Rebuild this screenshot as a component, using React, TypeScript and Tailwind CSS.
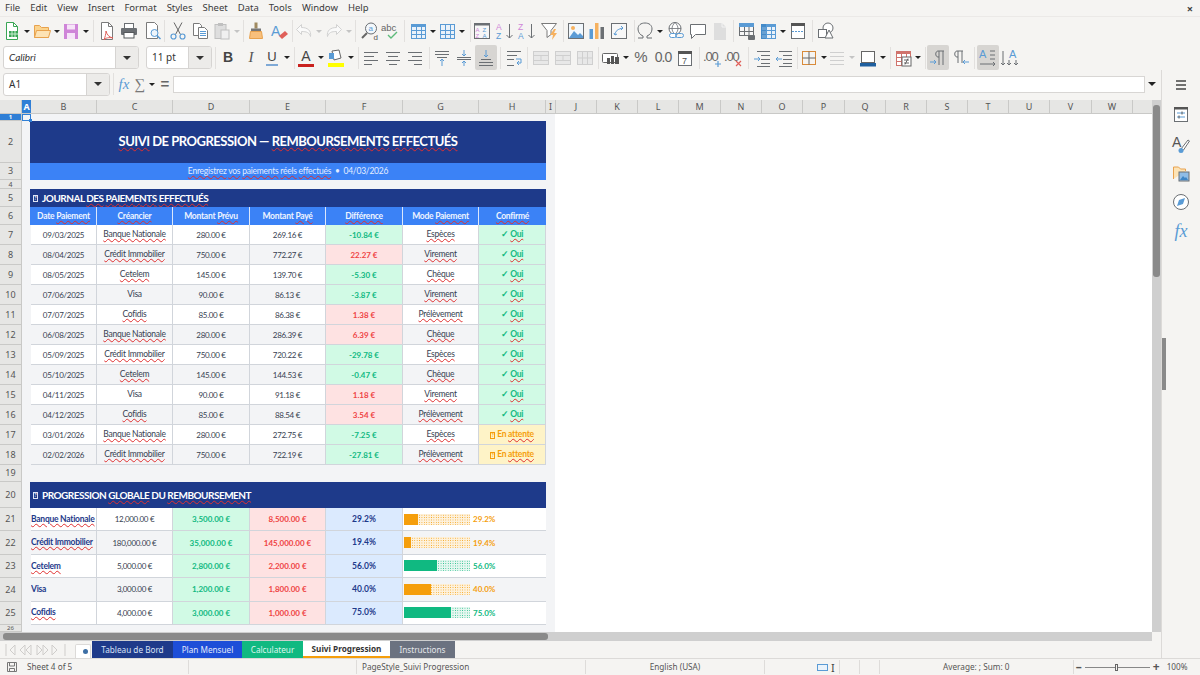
import type { ReactNode } from 'react'

const S = ({ children, size = 20 }: { children: ReactNode; size?: number }) => (
  <svg width={size} height={size} viewBox="0 0 20 20" fill="none" strokeWidth="1" className="block">
    {children}
  </svg>
)

const Ic = ({ children, className = '' }: { children: ReactNode; className?: string }) => (
  <span className={'flex h-[22px] w-[22px] shrink-0 items-center justify-center rounded-[2px] ' + className}>{children}</span>
)
const Arrow = ({ off = false }: { off?: boolean }) => (
  <span className="flex w-[8px] shrink-0 justify-center">
    <span className={'h-0 w-0 border-x-[3px] border-t-[3px] border-x-transparent ' + (off ? 'border-t-[#c4c4c4]' : 'border-t-[#222222]')} />
  </span>
)
const Sep = ({ className = '' }: { className?: string }) => <span className={'h-[22px] w-px shrink-0 bg-[#e2e0de] ' + className} />

const Lines = ({ ys, x1, x2, color = '#6b6f73' }: { ys: number[]; x1: number[]; x2: number[]; color?: string }) => (
  <>
    {ys.map((y, i) => (
      <path key={y} d={`M${x1[i]} ${y}.5H${x2[i]}`} stroke={color} />
    ))}
  </>
)

const Grid = ({ stroke = '#5a9bd5', fill = '#eaf2fa', head = true }: { stroke?: string; fill?: string; head?: boolean }) => (
  <>
    <rect x="3.5" y="3.5" width="14" height="14" fill={fill} stroke={stroke} />
    {head && <rect x="3" y="3" width="15" height="3" fill={stroke} />}
    <path d="M8.5 4v13M13.5 4v13M4 9.5h13M4 13.5h13" stroke={stroke} />
  </>
)

const NewDoc = () => (
  <S>
    <path d="M4.5 1.5h7l4 4v13h-11z" fill="#fff" stroke="#3aa655" />
    <path d="M11.5 1.5v4h4" stroke="#3aa655" />
    <rect x="7" y="10" width="9" height="6" fill="#3aa655" />
    <path d="M10 10v6M13 10v6M7 13h9" stroke="#c9ecd0" />
  </S>
)
const Folder = () => (
  <S>
    <path d="M2.5 16.5v-12h5l2 2h7v10z" fill="#fbd38d" stroke="#e8a24e" />
    <path d="M2.5 16.5l2-7h14l-2 7z" fill="#fde3b5" stroke="#e8a24e" />
  </S>
)
const Save = () => (
  <S>
    <rect x="3" y="3" width="14" height="15" fill="#cf85d8" />
    <rect x="6" y="3.5" width="8" height="5" fill="#f6e4f8" />
    <rect x="6" y="12" width="8" height="6" fill="#f6e4f8" />
  </S>
)
const Pdf = () => (
  <S>
    <path d="M4.5 1.5h7l4 4v13h-11z" fill="#fff" stroke="#7a7a7a" />
    <path d="M11.5 1.5v4h4" stroke="#7a7a7a" />
    <path d="M9 10c1 4 3 6 7 7-4-1-8 0-9 2 1-3 2-6 2-9z" stroke="#e0605a" />
  </S>
)
const Printer = () => (
  <S>
    <rect x="5.5" y="2.5" width="9" height="5" fill="#fff" stroke="#6b6f73" />
    <rect x="2" y="7" width="16" height="7" rx="1" fill="#6b6f73" />
    <rect x="5" y="11.5" width="10" height="5.5" fill="#fff" stroke="#55585b" />
  </S>
)
const Preview = () => (
  <S>
    <path d="M3.5 1.5h8l3 3v13h-11z" fill="#fff" stroke="#7a7a7a" />
    <circle cx="11.5" cy="12" r="3.5" fill="#eef5fb" stroke="#5a9bd5" />
    <path d="M14 14.5l3.5 3.5" stroke="#5a9bd5" strokeWidth="1.5" />
  </S>
)
const Cut = () => (
  <S>
    <path d="M6 1.5l6.5 12M14 1.5l-6.5 12" stroke="#666" />
    <circle cx="5.5" cy="15.5" r="2.5" stroke="#5a9bd5" strokeWidth="1.2" />
    <circle cx="14.5" cy="15.5" r="2.5" stroke="#5a9bd5" strokeWidth="1.2" />
  </S>
)
const Copy = () => (
  <S>
    <path d="M3.5 2.5h6l2 2v10h-8z" fill="#fff" stroke="#7a7a7a" />
    <path d="M8.5 6.5h6l3 3v8h-9z" fill="#fff" stroke="#7a7a7a" />
    <Lines ys={[10, 12, 14]} x1={[10, 10, 10]} x2={[16, 16, 16]} color="#5a9bd5" />
  </S>
)
const Paste = () => (
  <S>
    <rect x="3" y="3.5" width="11" height="14" fill="#dedede" stroke="#c0c0c0" />
    <rect x="6" y="2" width="5" height="3" fill="#c0c0c0" />
    <rect x="9" y="9" width="8" height="9" fill="#f0f0f0" stroke="#c0c0c0" />
  </S>
)
const Clone = () => (
  <S>
    <rect x="8.5" y="1.5" width="3" height="6" fill="#a08a60" />
    <rect x="5" y="7.5" width="10" height="2.5" fill="#777" />
    <path d="M4.5 10.5h11l1 7h-13z" fill="#f9c07c" stroke="#e8a24e" />
  </S>
)
const Clear = () => (
  <S>
    <text x="2" y="15" fontFamily="Liberation Sans" fontSize="14" fill="#5a9bd5">A</text>
    <path d="M10 15l6-5 3 3-6 5z" fill="#e0605a" />
  </S>
)
const Undo = ({ flip = false }: { flip?: boolean }) => (
  <S>
    <g transform={flip ? 'matrix(-1 0 0 1 20 0)' : undefined}>
      <path d="M2.5 8.5l5-5v3c6 0 10 3 9 9-1-4-4-5-9-5v3z" fill="#fafafa" stroke="#d2d2d2" />
    </g>
  </S>
)
const Find = () => (
  <S>
    <circle cx="11" cy="7.5" r="5.5" fill="#f3f8fc" stroke="#6b6f73" />
    <path d="M7 12l-5 5" stroke="#666" strokeWidth="2" />
    <text x="8.5" y="10" fontFamily="Liberation Sans" fontSize="8" fill="#5a9bd5">a</text>
    <text x="13.5" y="19" fontFamily="Liberation Sans" fontSize="8" fill="#555">d</text>
  </S>
)
const Spell = () => (
  <S>
    <text x="0" y="10" fontFamily="Liberation Sans" fontSize="9.5" fill="#666">abc</text>
    <path d="M7 14l3 3 6-6" stroke="#5dbb7a" strokeWidth="1.4" />
  </S>
)
const Sort = ({ a, b }: { a: string; b: string }) => (
  <S>
    <text x="1" y="9" fontFamily="Liberation Sans" fontSize="8.5" fill="#cf85d8">{a}</text>
    <text x="1" y="18" fontFamily="Liberation Sans" fontSize="8.5" fill="#5a9bd5">{b}</text>
    <path d="M14.5 3v14M11.5 14l3 3 3-3" stroke="#6b6f73" />
  </S>
)
const AutoSort = () => (
  <S>
    <rect x="2.5" y="2.5" width="15" height="15" fill="#f7f7f7" stroke="#6b6f73" />
    <rect x="2" y="2" width="16" height="2.5" fill="#6b6f73" />
    <text x="3.5" y="10.5" fontFamily="Liberation Sans" fontSize="6" fill="#cf85d8">A</text>
    <text x="10.5" y="10.5" fontFamily="Liberation Sans" fontSize="6" fill="#5a9bd5">Z</text>
    <text x="3.5" y="16.5" fontFamily="Liberation Sans" fontSize="6" fill="#cf85d8">Z</text>
    <text x="10.5" y="16.5" fontFamily="Liberation Sans" fontSize="6" fill="#5a9bd5">A</text>
  </S>
)
const Filter = () => (
  <S>
    <path d="M1.5 2.5h15l-5.5 7v4l-4 3v-7z" fill="#fff" stroke="#7a7a7a" />
    <path d="M14 8l-4 6h3l-1 5 5-7h-3l2-4z" fill="#f6b15f" />
  </S>
)
const Picture = () => (
  <S>
    <rect x="2.5" y="2.5" width="15" height="15" fill="#f1f7fc" stroke="#6b6f73" />
    <circle cx="7" cy="7" r="2" fill="#f6b15f" />
    <path d="M3 17l5-7 4 4 2-2 3 3v2z" fill="#5a9bd5" />
  </S>
)
const Chart = () => (
  <S>
    <rect x="2.5" y="8" width="3.5" height="10" fill="#5a9bd5" />
    <rect x="8" y="2" width="3.5" height="16" fill="#f6b15f" />
    <rect x="13.5" y="6" width="3.5" height="12" fill="#6b6f73" />
  </S>
)
const Pivot = () => (
  <S>
    <rect x="2.5" y="2.5" width="15" height="15" fill="#f7f7f7" stroke="#6b6f73" />
    <path d="M6 14c0-4 3-6 8-7M12 5l2 2-2 2M5 12l1 2 2-1" stroke="#5a9bd5" />
  </S>
)
const Omega = () => (
  <S>
    <path d="M3 17h5v-2c-3-1-5-4-5-7 0-4 3-6 7-6s7 2 7 6c0 3-2 6-5 7v2h5" stroke="#6b6f73" />
  </S>
)
const LinkI = () => (
  <S>
    <circle cx="9" cy="7.5" r="6" fill="#fff" stroke="#6b6f73" />
    <path d="M3 7.5h12M9 1.5c-4 4-4 8 0 12M9 1.5c4 4 4 8 0 12" stroke="#6b6f73" strokeWidth="0.8" />
    <rect x="3.5" y="12.5" width="7" height="4" rx="2" fill="#fff" stroke="#5a9bd5" />
    <rect x="9.5" y="12.5" width="8" height="4" rx="2" stroke="#5a9bd5" />
  </S>
)
const Comment = () => (
  <S>
    <path d="M2.5 3.5h15v10h-10l-4 4v-4h-1z" fill="#fff" stroke="#6b6f73" />
  </S>
)
const Note = () => (
  <S>
    <path d="M4 2h8l4 4v13H4z" fill="#dedede" />
    <path d="M12 2v4h4" stroke="#f3f3f3" />
  </S>
)
const Freeze = () => (
  <S>
    <rect x="2.5" y="2.5" width="14" height="12" fill="#f7f7f7" stroke="#6b6f73" />
    <rect x="2" y="2" width="15" height="4" fill="#5a9bd5" />
    <path d="M7.5 6v8M12 6v8M3 10.5h13" stroke="#6b6f73" />
    <rect x="11" y="14" width="7" height="5" rx="1" fill="#6b6f73" />
  </S>
)
const Split = () => (
  <S>
    <Grid />
    <rect x="3" y="3" width="5" height="15" fill="#3d85c6" opacity="0.75" />
  </S>
)
const HeaderI = () => (
  <S>
    <rect x="3.5" y="2.5" width="13" height="15" fill="#fff" stroke="#6b6f73" />
    <rect x="3" y="2" width="14" height="3" fill="#555" />
    <path d="M4 10.5h12" stroke="#5a9bd5" strokeDasharray="2 1" />
  </S>
)
const Shapes = () => (
  <S>
    <circle cx="12" cy="7" r="5" fill="#fff" stroke="#6b6f73" />
    <rect x="2.5" y="8.5" width="8" height="8" fill="#fff" stroke="#6b6f73" />
    <path d="M13 9l4 8h-8z" fill="#fff" stroke="#6b6f73" />
  </S>
)

const AlignI = ({ kind }: { kind: 'l' | 'c' | 'r' }) => {
  const s =
    kind === 'l' ? { a: [3, 3, 3, 3], b: [17, 13, 17, 11] } : kind === 'c' ? { a: [3, 5, 3, 6], b: [17, 15, 17, 14] } : { a: [3, 7, 3, 9], b: [17, 17, 17, 17] }
  return (
    <S>
      <Lines ys={[4, 8, 12, 16]} x1={s.a} x2={s.b} />
    </S>
  )
}
const VAlign = ({ kind }: { kind: 't' | 'm' | 'b' }) => (
  <S>
    {kind === 't' && (
      <>
        <Lines ys={[3, 6, 9]} x1={[3, 3, 5]} x2={[17, 17, 15]} />
        <path d="M10 18V11M8 13l2-2 2 2" stroke="#5a9bd5" />
      </>
    )}
    {kind === 'm' && (
      <>
        <Lines ys={[9, 11]} x1={[3, 3]} x2={[17, 17]} />
        <path d="M10 2v6M8 6l2 2 2-2M10 18v-5M8 15l2-2 2 2" stroke="#5a9bd5" />
      </>
    )}
    {kind === 'b' && (
      <>
        <Lines ys={[11, 14, 17]} x1={[5, 3, 3]} x2={[15, 17, 17]} />
        <path d="M10 2v7M8 7l2 2 2-2" stroke="#5a9bd5" />
      </>
    )}
  </S>
)
const Wrap = () => (
  <S>
    <Lines ys={[3, 7, 11, 17]} x1={[3, 3, 3, 3]} x2={[17, 13, 10, 10]} />
    <path d="M12 11h5v4h-4M15 13l-2 2 2 2" stroke="#5a9bd5" />
  </S>
)
const Merge = ({ cross = false }: { cross?: boolean }) => (
  <S>
    <rect x="2.5" y="3.5" width="15" height="13" fill="#e8e8e8" stroke="#cfcfcf" />
    <path d={cross ? 'M7.5 4v12M12.5 4v12M3 10h14' : 'M3 7.5h14M3 12.5h14M10 8v4'} stroke="#cfcfcf" />
  </S>
)
const Currency = () => (
  <S>
    <rect x="1.5" y="5.5" width="15" height="9" rx="1" fill="#fff" stroke="#666" />
    <rect x="6" y="10" width="3" height="6" fill="#555" />
    <rect x="10" y="8" width="3" height="8" fill="#555" />
    <rect x="14" y="9" width="4" height="7" fill="#555" />
  </S>
)
const DateI = () => (
  <S>
    <rect x="3.5" y="3.5" width="13" height="14" fill="#fff" stroke="#6b6f73" />
    <rect x="3" y="3" width="14" height="3" fill="#555" />
    <text x="7" y="16" fontFamily="Liberation Sans" fontSize="9" fill="#555">7</text>
  </S>
)
const Dec = ({ add }: { add: boolean }) => (
  <S>
    <text x="0" y="13" fontFamily="Liberation Sans" fontSize="13" letterSpacing="-1.2" fill="#666">.00</text>
    {add ? <path d="M15 13v6M12 16h6" stroke="#5a9bd5" strokeWidth="1.2" /> : <path d="M12 13l5 5M17 13l-5 5" stroke="#e0605a" strokeWidth="1.2" />}
  </S>
)
const Indent = ({ out = false }: { out?: boolean }) => (
  <S>
    <Lines ys={[3, 7, 11, 15, 18]} x1={[5, 9, 9, 9, 5]} x2={[18, 18, 18, 18, 18]} />
    <path d={out ? 'M8 11H2M4 9l-2 2 2 2' : 'M2 11h6M6 9l2 2-2 2'} stroke="#5a9bd5" />
  </S>
)
const Borders = () => (
  <S>
    <rect x="3.5" y="3.5" width="13" height="13" stroke="#d98b3a" />
    <path d="M10 3.5v13M3.5 10h13" stroke="#666" />
  </S>
)
const BStyle = () => (
  <S>
    <Lines ys={[4, 8, 12, 16]} x1={[3, 3, 3, 3]} x2={[17, 17, 17, 17]} color="#cfcfcf" />
  </S>
)
const BColor = () => (
  <S>
    <rect x="3.5" y="3.5" width="13" height="11" fill="#fff" stroke="#666" />
    <rect x="2" y="15" width="16" height="3.5" fill="#1f5f9f" />
  </S>
)
const Cond = () => (
  <S>
    <Grid stroke="#d0736c" fill="#fff" />
    <rect x="9" y="9" width="9" height="9" fill="#fff" stroke="#666" />
    <path d="M11 12h5M11 15h5M15 10.5l-3 6" stroke="#666" />
  </S>
)
const Para = ({ left }: { left: boolean }) => (
  <S>
    {left ? (
      <>
        <path d="M16 3h-6c-3 0-3 6 0 6h1M11 3v14M15 3v14" stroke="#6b6f73" />
        <path d="M2 14h6M6 12l2 2-2 2" stroke="#5a9bd5" />
      </>
    ) : (
      <>
        <path d="M12 3H6c-3 0-3 6 0 6h1M7 3v12M11 3v12" stroke="#6b6f73" />
        <path d="M18 14h-6M14 12l-2 2 2 2" stroke="#5a9bd5" />
      </>
    )}
  </S>
)
const TextDir = () => (
  <S>
    <text x="1" y="10" fontFamily="Liberation Sans" fontSize="11" fill="#5a9bd5">A</text>
    <path d="M12 3h5M12 7h5M12 11h5M2 16h15M15 14l2 2-2 2" stroke="#6b6f73" />
  </S>
)
const TextVert = () => (
  <S>
    <text x="9" y="10" fontFamily="Liberation Sans" fontSize="11" fill="#5a9bd5">A</text>
    <path d="M3 3v14M1 15l2 2 2-2M9 12v5M7 15l2 2 2-2M16 12v5M14 15l2 2 2-2" stroke="#6b6f73" />
  </S>
)
const Fx = ({ cls }: { cls: string }) => <span className={'font-["Liberation_Serif"] italic text-[#5a9bd5] ' + cls}>fx</span>

const Tb1 = () => (
  <div className="flex h-[28px] items-center pl-px">
    <Ic><NewDoc /></Ic><Arrow />
    <Ic><Folder /></Ic><Arrow />
    <Ic className="-ml-px"><Save /></Ic><Arrow />
    <Sep className="ml-[3px]" />
    <Ic className="ml-[2px]"><Pdf /></Ic>
    <Ic><Printer /></Ic>
    <Ic className="ml-[2px]"><Preview /></Ic>
    <Sep />
    <Ic className="ml-[2px]"><Cut /></Ic>
    <Ic><Copy /></Ic>
    <Ic><Paste /></Ic><Arrow off />
    <Sep className="ml-[2px]" />
    <Ic className="ml-px"><Clone /></Ic>
    <Ic className="ml-px"><Clear /></Ic>
    <Sep className="ml-[2px]" />
    <Ic><Undo /></Ic><Arrow off />
    <Ic><Undo flip /></Ic><Arrow off />
    <Sep className="ml-[2px]" />
    <Ic className="ml-[3px]"><Find /></Ic>
    <Ic className="-ml-px"><Spell /></Ic>
    <Sep className="ml-[2px]" />
    <Ic className="ml-[2px]"><S><Grid /></S></Ic><Arrow />
    <Ic className="-ml-px"><S><Grid head={false} /></S></Ic><Arrow />
    <Sep className="ml-[4px]" />
    <Ic><AutoSort /></Ic>
    <Ic className="ml-px"><Sort a="A" b="Z" /></Ic>
    <Ic><Sort a="Z" b="A" /></Ic>
    <Ic className="ml-px"><Filter /></Ic>
    <Sep className="ml-[2px]" />
    <Ic className="ml-px"><Picture /></Ic>
    <Ic className="-ml-px"><Chart /></Ic>
    <Ic><Pivot /></Ic>
    <Sep className="ml-[4px]" />
    <Ic className="-ml-px"><Omega /></Ic><Arrow />
    <Ic className="ml-px"><LinkI /></Ic>
    <Ic><Comment /></Ic>
    <Ic><Note /></Ic>
    <Sep className="ml-[2px]" />
    <Ic className="ml-[2px]"><Freeze /></Ic>
    <Ic className="-ml-px"><Split /></Ic><Arrow />
    <Ic><HeaderI /></Ic>
    <Sep className="ml-[3px]" />
    <Ic className="ml-[2px]"><Shapes /></Ic>
  </div>
)

const Combo = ({ w, text, cls = '' }: { w: string; text: string; cls?: string }) => (
  <div className={'flex h-[23px] shrink-0 overflow-hidden rounded-[3px] border border-[#d6d4d2] bg-white ' + w}>
    <span className={'flex flex-1 items-center pl-[5px] text-[10px] text-[#333] ' + cls}>{text}</span>
    <span className="flex w-[23px] items-center justify-center border-l border-[#d6d4d2] bg-[#ecebe9]">
      <span className="h-0 w-0 border-x-[4px] border-t-[4px] border-x-transparent border-t-[#333]" />
    </span>
  </div>
)

const Tb2 = () => (
  <div className="flex h-[25px] items-center pl-[3px]">
    <Combo w="w-[136px]" text="Calibri" cls="font-['Lato'] italic" />
    <Combo w="ml-[7px] w-[66px]" text="11 pt" />
    <Sep className="ml-[3px]" />
    <Ic className="ml-px"><span className="font-['Liberation_Sans'] text-[14px] font-bold text-[#444]">B</span></Ic>
    <Ic className="ml-px"><span className="font-['Liberation_Serif'] text-[15px] italic text-[#555]">I</span></Ic>
    <Ic className="-ml-px"><span className="border-b-2 border-[#7fa9d6] px-px font-['Liberation_Sans'] text-[13px] leading-[14px] text-[#444]">U</span></Ic><Arrow />
    <Sep className="ml-[3px]" />
    <Ic><span className="w-[16px] border-b-[3px] border-[#c9211e] text-center font-['Liberation_Sans'] text-[14px] leading-[15px] text-[#444]">A</span></Ic><Arrow />
    <Ic><S><path d="M6 3l7-1 2 8-7 2z" fill="#fff" stroke="#666" /><rect x="3" y="5" width="5" height="6" fill="#5a9bd5" /><rect x="2" y="15" width="16" height="4" fill="#ffff00" /></S></Ic><Arrow />
    <Sep className="ml-[3px]" />
    <Ic className="ml-px"><AlignI kind="l" /></Ic>
    <Ic><AlignI kind="c" /></Ic>
    <Ic><AlignI kind="r" /></Ic>
    <Sep className="ml-[3px]" />
    <Ic className="ml-px"><VAlign kind="t" /></Ic>
    <Ic><VAlign kind="m" /></Ic>
    <Ic className="h-[25px] bg-[#d7d5d2]"><VAlign kind="b" /></Ic>
    <Sep className="ml-[3px]" />
    <Ic className="ml-[2px]"><Wrap /></Ic>
    <Sep className="ml-[2px]" />
    <Ic className="ml-[2px]"><Merge /></Ic>
    <Ic><Merge /></Ic>
    <Ic><Merge cross /></Ic>
    <Sep className="ml-[2px]" />
    <Ic className="ml-px"><Currency /></Ic><Arrow />
    <Ic><span className="font-['Liberation_Sans'] text-[15px] text-[#666]">%</span></Ic>
    <Ic><span className="font-['Liberation_Sans'] text-[14px] tracking-[-1px] text-[#666]">0.0</span></Ic>
    <Ic><DateI /></Ic>
    <Sep className="ml-[3px]" />
    <Ic className="ml-[2px]"><Dec add /></Ic>
    <Ic className="-ml-px"><Dec add={false} /></Ic>
    <Sep className="ml-[3px]" />
    <Ic className="ml-[2px]"><Indent /></Ic>
    <Ic><Indent out /></Ic>
    <Sep className="ml-[2px]" />
    <Ic><Borders /></Ic><Arrow />
    <Ic className="-ml-[2px]"><BStyle /></Ic><Arrow off />
    <Ic className="ml-px"><BColor /></Ic><Arrow />
    <Sep className="ml-[3px]" />
    <Ic className="ml-px"><Cond /></Ic><Arrow />
    <Sep className="ml-[3px]" />
    <Ic className="ml-px h-[25px] bg-[#d7d5d2]"><Para left /></Ic>
    <Ic className="ml-px"><Para left={false} /></Ic>
    <Sep className="ml-[2px]" />
    <Ic className="ml-[2px] h-[25px] bg-[#d7d5d2]"><TextDir /></Ic>
    <Ic><TextVert /></Ic>
  </div>
)

const FormulaBar = () => (
  <div className="flex h-[30px] items-center pb-[2px] pl-[3px]">
    <Combo w="w-[107px]" text="A1" />
    <Sep className="ml-[3px]" />
    <Ic className="-ml-px"><Fx cls="text-[15px]" /></Ic>
    <span className="flex w-[9px] justify-center font-['Liberation_Serif'] text-[15px] text-[#777]">∑</span>
    <span className="ml-[4px]"><Arrow /></span>
    <span className="ml-[2px] flex w-[14px] justify-center font-['Liberation_Sans'] text-[15px] font-bold text-[#666]">=</span>
    <div className="ml-px h-[17px] w-[972px] border border-[#d8d6d4] bg-white" />
    <span className="ml-[3px] h-0 w-0 border-x-[4px] border-t-[4px] border-x-transparent border-t-[#222]" />
  </div>
)

const cols: [string, string][] = [
  ['B', 'w-[66px]'], ['C', 'w-[76px]'], ['D', 'w-[77px]'], ['E', 'w-[76px]'], ['F', 'w-[77px]'], ['G', 'w-[76px]'], ['H', 'w-[67px]'], ['I', 'w-[10px]'],
  ['J', 'w-[41px]'], ['K', 'w-[41px]'], ['L', 'w-[41px]'], ['M', 'w-[42px]'], ['N', 'w-[41px]'], ['O', 'w-[41px]'], ['P', 'w-[42px]'], ['Q', 'w-[41px]'],
  ['R', 'w-[41px]'], ['S', 'w-[41px]'], ['T', 'w-[41px]'], ['U', 'w-[41px]'], ['V', 'w-[42px]'], ['W', 'w-[41px]'],
]

const ColHeaders = () => (
  <div className="flex h-[14px] border-b border-[#c9c9c7] bg-[#e6e6e4] font-['Noto_Sans'] text-[9px] leading-[13px] text-[#555]">
    <div className="w-[22px] shrink-0 border-r border-[#c9c9c7]" />
    <div className="w-[9px] shrink-0 bg-[#2f7fd6] text-center font-bold text-white">A</div>
    {cols.map(([c, w]) => (
      <div key={c} className={'shrink-0 border-r border-[#c9c9c7] text-center ' + w}>{c}</div>
    ))}
  </div>
)

const rowLabels: [string, string][] = [
  ['1', 'h-[7px] bg-[#2f7fd6] text-[6px] font-bold leading-none text-white'], ['2', 'h-[42px]'], ['3', 'h-[17px]'], ['4', 'h-[9px] text-[7px] leading-none'], ['5', 'h-[18px]'], ['6', 'h-[18px]'],
  ['7', 'h-[20px]'], ['8', 'h-[20px]'], ['9', 'h-[20px]'], ['10', 'h-[20px]'], ['11', 'h-[20px]'], ['12', 'h-[20px]'],
  ['13', 'h-[20px]'], ['14', 'h-[20px]'], ['15', 'h-[20px]'], ['16', 'h-[20px]'], ['17', 'h-[20px]'], ['18', 'h-[20px]'],
  ['19', 'h-[17px]'], ['20', 'h-[26px]'], ['21', 'h-[23.4px]'], ['22', 'h-[23.4px]'], ['23', 'h-[23.4px]'], ['24', 'h-[23.4px]'], ['25', 'h-[23.4px]'], ['26', 'h-[7px] text-[6px] leading-none'],
]

const RowHeaders = () => (
  <div className="w-[22px] shrink-0 overflow-hidden border-r border-[#c9c9c7] bg-[#e6e6e4] font-['Noto_Sans'] text-[9px] text-[#555]">
    {rowLabels.map(([n, h]) => (
      <div key={n} className={'flex items-center justify-center overflow-hidden border-b border-[#c9c9c7] ' + h}>
        {n}
      </div>
    ))}
  </div>
)

// spell-check squiggle
const W = ({ children }: { children: ReactNode }) => (
  <span className="underline decoration-[#e03030] decoration-wavy decoration-1 underline-offset-[1px]">{children}</span>
)
const Missing = ({ cls = 'border-[#dfe5f5] text-white' }: { cls?: string }) => (
  <span className={'mr-[2px] inline-flex h-[7px] w-[5px] items-center justify-center border-[0.5px] text-[5px] leading-none tracking-normal ' + cls}>?</span>
)

const payments = [
  ['09/03/2025', 'Banque Nationale', '280.00 €', '269.16 €', '-10.84 €', 'Espèces', 'ok'],
  ['08/04/2025', 'Crédit Immobilier', '750.00 €', '772.27 €', '22.27 €', 'Virement', 'ok'],
  ['08/05/2025', 'Cetelem', '145.00 €', '139.70 €', '-5.30 €', 'Chèque', 'ok'],
  ['07/06/2025', 'Visa', '90.00 €', '86.13 €', '-3.87 €', 'Virement', 'ok'],
  ['07/07/2025', 'Cofidis', '85.00 €', '86.38 €', '1.38 €', 'Prélèvement', 'ok'],
  ['06/08/2025', 'Banque Nationale', '280.00 €', '286.39 €', '6.39 €', 'Chèque', 'ok'],
  ['05/09/2025', 'Crédit Immobilier', '750.00 €', '720.22 €', '-29.78 €', 'Espèces', 'ok'],
  ['05/10/2025', 'Cetelem', '145.00 €', '144.53 €', '-0.47 €', 'Chèque', 'ok'],
  ['04/11/2025', 'Visa', '90.00 €', '91.18 €', '1.18 €', 'Virement', 'ok'],
  ['04/12/2025', 'Cofidis', '85.00 €', '88.54 €', '3.54 €', 'Prélèvement', 'ok'],
  ['03/01/2026', 'Banque Nationale', '280.00 €', '272.75 €', '-7.25 €', 'Espèces', 'wait'],
  ['02/02/2026', 'Crédit Immobilier', '750.00 €', '722.19 €', '-27.81 €', 'Prélèvement', 'wait'],
]

const progress = [
  ['Banque Nationale', '12,000.00 €', '3,500.00 €', '8,500.00 €', '29.2%', 'w-[14px]', 'o'],
  ['Crédit Immobilier', '180,000.00 €', '35,000.00 €', '145,000.00 €', '19.4%', 'w-[7px]', 'o'],
  ['Cetelem', '5,000.00 €', '2,800.00 €', '2,200.00 €', '56.0%', 'w-[33px]', 'g'],
  ['Visa', '3,000.00 €', '1,200.00 €', '1,800.00 €', '40.0%', 'w-[27px]', 'o'],
  ['Cofidis', '4,000.00 €', '3,000.00 €', '1,000.00 €', '75.0%', 'w-[47px]', 'g'],
]

const isPlain = (s: string) => s === 'Visa'
const cell = 'flex items-center justify-center whitespace-nowrap border-r border-b border-[#d1d5db]'
const txt = ' text-[8.5px] tracking-[-0.25px]'
const num = ' text-[8px] tracking-[-0.3px]'
const headCell = 'flex items-center justify-center whitespace-nowrap border-r border-[#dbe7fb]'

const JournalHead = () => (
  <div className="grid h-[18px] grid-cols-[66px_76px_77px_76px_77px_76px_67px] bg-[#3b82f6] pl-px text-[8.5px] font-bold tracking-[-0.25px] text-[#eef4ff]">
    <div className={headCell}><span>Date <W>Paiement</W></span></div>
    <div className={headCell}><W>Créancier</W></div>
    <div className={headCell}><span>Montant <W>Prévu</W></span></div>
    <div className={headCell}><span>Montant <W>Payé</W></span></div>
    <div className={headCell}><W>Différence</W></div>
    <div className={headCell}><span>Mode <W>Paiement</W></span></div>
    <div className="flex items-center justify-center"><W>Confirmé</W></div>
  </div>
)

const JournalRow = ({ r, i }: { r: string[]; i: number }) => {
  const neg = r[4].startsWith('-')
  const bg = ' ' + (i % 2 === 0 ? 'bg-white' : 'bg-[#f3f4f6]')
  return (
    <div className="grid h-[20px] grid-cols-[66px_76px_77px_76px_77px_76px_67px] pl-px text-[#374151]">
      <div className={cell + bg + num}>{r[0]}</div>
      <div className={cell + bg + txt}>{isPlain(r[1]) ? r[1] : <W>{r[1]}</W>}</div>
      <div className={cell + bg + num}>{r[2]}</div>
      <div className={cell + bg + num}>{r[3]}</div>
      <div className={cell + ' text-[8px] font-bold ' + (neg ? 'bg-[#d1fae5] text-[#10b981]' : 'bg-[#fee2e2] text-[#ef4444]')}>{r[4]}</div>
      <div className={cell + bg + txt}><W>{r[5]}</W></div>
      {r[6] === 'ok' ? (
        <div className={cell + txt + ' bg-[#d1fae5] font-bold text-[#10b981]'}><span>✓ <W>Oui</W></span></div>
      ) : (
        <div className={cell + txt + ' bg-[#fef3c7] font-bold text-[#f59e0b]'}>
          <span><Missing cls="border-[#f59e0b] text-[#f59e0b]" />En <W>attente</W></span>
        </div>
      )}
    </div>
  )
}

const ProgressRow = ({ r, i }: { r: string[]; i: number }) => {
  const bg = ' ' + (i % 2 === 0 ? 'bg-white' : 'bg-[#f3f4f6]')
  const green = r[6] === 'g'
  return (
    <div className="grid h-[23.4px] grid-cols-[66px_76px_77px_76px_77px_143px] pl-px text-[#374151]">
      <div className={'flex items-center justify-start overflow-hidden whitespace-nowrap border-r border-b border-[#d1d5db] font-bold text-[#1e3a8a]' + txt + bg}>
        {isPlain(r[0]) ? r[0] : <W>{r[0]}</W>}
      </div>
      <div className={cell + bg + num}>{r[1]}</div>
      <div className={cell + ' bg-[#d1fae5] text-[8px] font-bold text-[#10b981]'}>{r[2]}</div>
      <div className={cell + ' bg-[#fee2e2] text-[8px] font-bold text-[#ef4444]'}>{r[3]}</div>
      <div className={cell + ' bg-[#dbeafe] text-[8.5px] font-bold text-[#1e3a8a]'}>{r[4]}</div>
      <div className={'flex items-center border-b border-[#d1d5db] pl-px' + bg}>
        <div className={'flex h-[11px] w-[66px] ' + (green
          ? 'bg-[radial-gradient(#10b981_0.6px,#e6f7f0_0.7px)] bg-[length:2.4px_2.4px]'
          : 'bg-[radial-gradient(#f59e0b_0.6px,#fdf1dc_0.7px)] bg-[length:2.4px_2.4px]')}>
          <div className={'h-full ' + r[5] + ' ' + (green ? 'bg-[#10b981]' : 'bg-[#f59e0b]')} />
        </div>
        <span className={'ml-[3px] text-[8px] font-bold ' + (green ? 'text-[#10b981]' : 'text-[#f59e0b]')}>{r[4]}</span>
      </div>
    </div>
  )
}

const Sheet = () => (
  <div className="relative flex h-[518px] overflow-hidden">
    <RowHeaders />
    <div className="w-[533px] shrink-0 bg-[#f3f4f6] pl-[8px] font-['Lato']">
      <div className="h-[7px]" />
      <div className="w-[516px]">
        <div className="flex h-[42px] items-center justify-center bg-[#1e3a8a] text-[13px] font-bold tracking-[-0.5px] text-white">
          <span><W>SUIVI</W> DE PROGRESSION — <W>REMBOURSEMENTS</W> <W>EFFECTUÉS</W></span>
        </div>
        <div className="flex h-[17px] items-center justify-center bg-[#3b82f6] text-[8.5px] tracking-[-0.25px] text-[#e4edff]">
          <span><W>Enregistrez</W> <W>vos</W> <W>paiements</W> <W>réels</W> <W>effectués</W>&nbsp; •&nbsp; 04/03/2026</span>
        </div>
        <div className="h-[9px]" />
        <div className="flex h-[18px] items-center bg-[#1e3a8a] pl-[3px] text-[10px] font-bold tracking-[-0.5px] text-white">
          <Missing /><span className="ml-[2px]">JOURNAL <W>DES</W> <W>PAIEMENTS</W> <W>EFFECTUÉS</W></span>
        </div>
        <JournalHead />
        {payments.map((r, i) => <JournalRow key={r[0]} r={r} i={i} />)}
        <div className="h-[17px]" />
        <div className="flex h-[26px] items-center bg-[#1e3a8a] pl-[3px] text-[10px] font-bold tracking-[-0.5px] text-white">
          <Missing /><span className="ml-[2px]">PROGRESSION <W>GLOBALE</W> DU <W>REMBOURSEMENT</W></span>
        </div>
        {progress.map((r, i) => <ProgressRow key={r[0]} r={r} i={i} />)}
      </div>
    </div>
    <div className="flex-1 bg-white" />
    {/* cell cursor on A1 */}
    <div className="absolute left-[22px] top-0 h-[7px] w-[9px] border border-[#2f7fd6]" />
    <div className="absolute left-[29px] top-[5px] h-[3px] w-[3px] bg-[#2f7fd6]" />
  </div>
)

const VScroll = () => (
  <div className="h-[532px] w-[9px] shrink-0 bg-[#cfcfcf] px-px pt-[5px]">
    <div className="h-[172px] rounded-[3px] bg-[#8a8a8a]" />
  </div>
)

const HScroll = () => (
  <div className="h-[9px] w-[1152px] bg-[#cfcfcf] pl-[3px] pt-px">
    <div className="h-[7px] w-[545px] rounded-[3px] bg-[#8a8a8a]" />
  </div>
)

const NavArrows = () => (
  <svg width="62" height="14" viewBox="0 0 62 14" fill="none" stroke="#cfcdcb" className="ml-[5px]">
    <path d="M1 1v12M10 2l-5 5 5 5zM20 2l-5 5 5 5zM26 2l-5 5 5 5zM32 2l5 5-5 5zM38 2l5 5-5 5zM47 2l5 5-5 5zM60 1v12" />
  </svg>
)

const Tabs = () => (
  <div className="flex h-[17px] items-stretch bg-[#f5f4f2] font-['Noto_Sans'] text-[8.2px] leading-[17px]">
    <div className="flex w-[74px] items-center"><NavArrows /></div>
    <div className="ml-px flex h-[14px] w-[16px] items-center justify-end self-end rounded-t-[2px] border-x border-t border-[#dcdad8] bg-white pr-[2px]">
      <span className="h-[5px] w-[5px] rounded-full bg-[#3d6fa5]" />
    </div>
    <div className="ml-px w-[81px] bg-[#1e3a8a] text-center text-[#d9e2f7]">Tableau de Bord</div>
    <div className="w-[69px] bg-[#1d4ed8] text-center text-[#e2e9fb]">Plan Mensuel</div>
    <div className="w-[61px] bg-[#10b981] text-center text-[#dff7ee]">Calculateur</div>
    <div className="w-[87px] border-b-2 border-[#f59e0b] bg-white text-center font-bold leading-[15px] text-[#333]">Suivi Progression</div>
    <div className="w-[65px] bg-[#6b7280] text-center text-[#e5e7eb]">Instructions</div>
  </div>
)

const StatusSep = ({ cls }: { cls: string }) => <span className={'h-[14px] w-px shrink-0 bg-[#dedcda] ' + cls} />

const StatusBar = () => (
  <div className="flex h-[17px] items-center border-t border-[#dcdad8] bg-[#f5f4f2] font-['Noto_Sans'] text-[8.2px] text-[#555]">
    <span className="ml-[6px] w-[12px]">
      <svg width="12" height="12" viewBox="0 0 12 12" fill="none" stroke="#777"><path d="M1.5 1.5h9v9h-9zM3.5 2v3h5V2M3.5 10V7.5h5V10" /></svg>
    </span>
    <span className="ml-[9px] w-[161px]">Sheet 4 of 5</span>
    <StatusSep cls="ml-0" />
    <StatusSep cls="ml-[167px]" />
    <span className="ml-[5px] w-[223px]">PageStyle_Suivi Progression</span>
    <StatusSep cls="" />
    <span className="w-[178px] text-center">English (USA)</span>
    <StatusSep cls="" />
    <span className="ml-[52px] h-[7px] w-[11px] border border-[#5a9bd5] bg-[#eaf3fb]" />
    <span className="ml-[3px] text-[11px] leading-none text-[#444]">I</span>
    <StatusSep cls="ml-[4px]" />
    <StatusSep cls="ml-[19px]" />
    <StatusSep cls="ml-[19px]" />
    <span className="w-[193px] text-center">Average: ; Sum: 0</span>
    <StatusSep cls="" />
    <span className="ml-[2px] text-[12px] font-bold leading-none">–</span>
    <span className="relative ml-[3px] h-px w-[65px] bg-[#888]">
      <span className="absolute left-[30px] top-[-3px] h-[7px] w-[3px] border border-[#666] bg-[#f5f4f2]" />
    </span>
    <span className="ml-[3px] text-[12px] font-bold leading-none">+</span>
    <span className="ml-[7px]">100%</span>
  </div>
)

const SideIcon = ({ children, cls = '' }: { children: ReactNode; cls?: string }) => (
  <span className={'flex h-[29px] items-center justify-center ' + cls}>{children}</span>
)

const Sidebar = () => (
  <div className="relative w-[39px] shrink-0 border-l border-[#dcdad8] bg-[#f5f4f2]">
    <SideIcon>
      <svg width="14" height="12" viewBox="0 0 14 12" stroke="#444" strokeWidth="1.5"><path d="M2 2h10M2 6h10M2 10h10" /></svg>
    </SideIcon>
    <SideIcon cls="mt-[1px]"><S><rect x="3.5" y="2.5" width="13" height="14" fill="#fff" stroke="#6b6f73" /><rect x="3" y="2" width="14" height="2.5" fill="#555" /><path d="M6 8h8M6 12h8" stroke="#5a9bd5" /><path d="M11 6.5v3M8 10.5v3" stroke="#555" /></S></SideIcon>
    <SideIcon><S><text x="1" y="13" fontFamily="Liberation Sans" fontSize="14" fill="#555">A</text><path d="M10 15l7-9 1.5 1-6 9z" fill="#fff" stroke="#6b6f73" /><circle cx="10" cy="16.5" r="2.5" fill="#5a9bd5" /></S></SideIcon>
    <SideIcon><S><path d="M2.5 16V4h5l2 2h5v2" fill="#fde3b5" stroke="#e8a24e" /><rect x="8" y="9" width="10" height="9" fill="#8fbce6" stroke="#6b6f73" /><path d="M9 17l3-4 2 2 1-1 2 3z" fill="#3d85c6" /></S></SideIcon>
    <SideIcon><S><circle cx="10" cy="10" r="7.5" fill="#fff" stroke="#6b6f73" /><path d="M14 6l-6 2-2 6 6-2z" fill="#5a9bd5" /></S></SideIcon>
    <SideIcon><Fx cls="text-[18px] leading-none" /></SideIcon>
    {/* deck handle */}
    <div className="absolute left-0 top-[268px] h-[52px] w-[4px] bg-[#8a8a8a]" />
  </div>
)

export default function App() {
  return (
    <div className="flex h-[675px] w-[1200px] flex-col overflow-hidden bg-[#f5f4f2] font-['Noto_Sans']">
      <div className="flex h-[17px] items-center justify-between border-b border-[#ebe9e7] pl-[5px] pr-[7px] text-[9.5px] text-[#3b3b3b]">
        <div className="flex gap-[10px]">
          {['File', 'Edit', 'View', 'Insert', 'Format', 'Styles', 'Sheet', 'Data', 'Tools', 'Window', 'Help'].map((m) => (
            <span key={m}>{m}</span>
          ))}
        </div>
        <span className="text-[11px] font-bold leading-none text-[#444]">×</span>
      </div>
      <Tb1 />
      <Tb2 />
      <div className="flex min-h-0 flex-1">
        <div className="w-[1161px] shrink-0">
          <FormulaBar />
          <div className="flex">
            <div className="w-[1152px] shrink-0">
              <ColHeaders />
              <Sheet />
            </div>
            <VScroll />
          </div>
          <HScroll />
          <Tabs />
        </div>
        <Sidebar />
      </div>
      <StatusBar />
    </div>
  )
}
